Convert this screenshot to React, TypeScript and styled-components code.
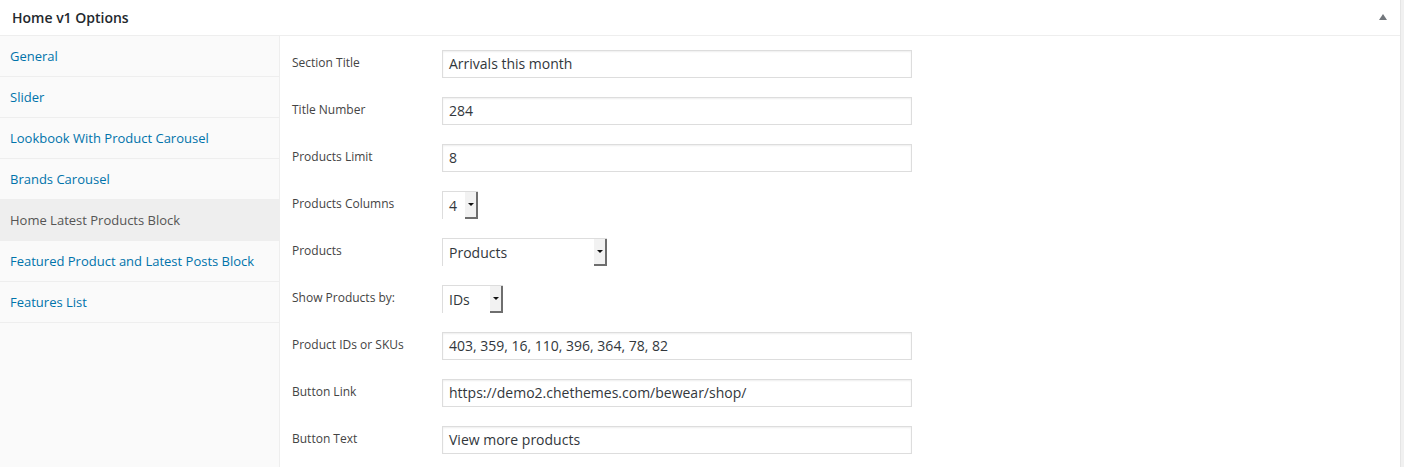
import React from "react";
import styled, { createGlobalStyle } from "styled-components";

const GlobalStyle = createGlobalStyle`
  html, body {
    margin: 0;
    padding: 0;
    background: #f1f1f1;
    font-family: "Open Sans", "Liberation Sans", sans-serif;
  }
`;

const Panel = styled.div`
  width: 1400px;
  height: 467px;
  background: #fff;
  border-right: 1px solid #e5e5e5;
  display: flex;
  flex-direction: column;
  overflow: hidden;
`;

const Header = styled.div`
  height: 35px;
  border-bottom: 1px solid #eee;
  display: flex;
  align-items: center;
  justify-content: space-between;
  padding: 0 13px 0 12px;
`;

const Title = styled.h2`
  margin: 0;
  font-size: 14px;
  font-weight: 600;
  color: #23282d;
`;

const Toggle = styled.span`
  width: 0;
  height: 0;
  border-left: 4px solid transparent;
  border-right: 4px solid transparent;
  border-bottom: 6px solid #72777c;
  margin-top: -1px;
`;

const Body = styled.div`
  flex: 1;
  display: flex;
`;

const Sidebar = styled.ul`
  width: 279px;
  margin: 0;
  padding: 0;
  list-style: none;
  background: #fafafa;
  border-right: 1px solid #eee;
`;

const NavItem = styled.li<{ $active?: boolean }>`
  height: 40px;
  border-bottom: 1px solid #eee;
  display: flex;
  align-items: center;
  padding-left: 10px;
  font-size: 13px;
  color: ${(p) => (p.$active ? "#555" : "#0073aa")};
  background: ${(p) => (p.$active ? "#eee" : "transparent")};
`;

const Content = styled.div`
  flex: 1;
  padding: 14px 12px 0 12px;
  display: flex;
  flex-direction: column;
  gap: 19px;
`;

const Row = styled.div`
  display: flex;
  align-items: flex-start;
`;

const Label = styled.label`
  width: 150px;
  font-size: 12px;
  line-height: 26px;
  color: #444;
`;

const TextInput = styled.div`
  width: 456px;
  height: 26px;
  border: 1px solid #ddd;
  box-shadow: inset 0 1px 2px rgba(0, 0, 0, 0.07);
  padding: 0 6px;
  font-size: 14px;
  line-height: 26px;
  color: #32373c;
  white-space: nowrap;
  overflow: hidden;
`;

const Select = styled.div<{ $width: number }>`
  width: ${(p) => p.$width}px;
  height: 27px;
  border: 1px solid #ddd;
  border-right: none;
  border-bottom: none;
  display: flex;
  font-size: 14px;
  color: #32373c;
  background: #fff;
`;

const SelectValue = styled.span`
  flex: 1;
  padding-left: 6px;
  line-height: 27px;
`;

const Arrow = styled.span`
  width: 11px;
  background: #f2f2f2;
  border-right: 2px solid #6e6e6e;
  border-bottom: 2px solid #6e6e6e;
  display: flex;
  align-items: center;
  justify-content: center;

  &::after {
    content: "";
    border-left: 3px solid transparent;
    border-right: 3px solid transparent;
    border-top: 3px solid #111;
  }
`;

const navItems = [
  "General",
  "Slider",
  "Lookbook With Product Carousel",
  "Brands Carousel",
  "Home Latest Products Block",
  "Featured Product and Latest Posts Block",
  "Features List",
];

type Field =
  | { label: string; type: "text"; value: string }
  | { label: string; type: "select"; value: string; width: number };

const fields: Field[] = [
  { label: "Section Title", type: "text", value: "Arrivals this month" },
  { label: "Title Number", type: "text", value: "284" },
  { label: "Products Limit", type: "text", value: "8" },
  { label: "Products Columns", type: "select", value: "4", width: 35 },
  { label: "Products", type: "select", value: "Products", width: 164 },
  { label: "Show Products by:", type: "select", value: "IDs", width: 60 },
  {
    label: "Product IDs or SKUs",
    type: "text",
    value: "403, 359, 16, 110, 396, 364, 78, 82",
  },
  {
    label: "Button Link",
    type: "text",
    value: "https://demo2.chethemes.com/bewear/shop/",
  },
  { label: "Button Text", type: "text", value: "View more products" },
];

export default function App() {
  return (
    <>
      <GlobalStyle />
      <Panel>
        <Header>
          <Title>Home v1 Options</Title>
          <Toggle />
        </Header>
        <Body>
          <Sidebar>
            {navItems.map((item) => (
              <NavItem key={item} $active={item === "Home Latest Products Block"}>
                {item}
              </NavItem>
            ))}
          </Sidebar>
          <Content>
            {fields.map((f) => (
              <Row key={f.label}>
                <Label>{f.label}</Label>
                {f.type === "text" ? (
                  <TextInput>{f.value}</TextInput>
                ) : (
                  <Select $width={f.width}>
                    <SelectValue>{f.value}</SelectValue>
                    <Arrow />
                  </Select>
                )}
              </Row>
            ))}
          </Content>
        </Body>
      </Panel>
    </>
  );
}
